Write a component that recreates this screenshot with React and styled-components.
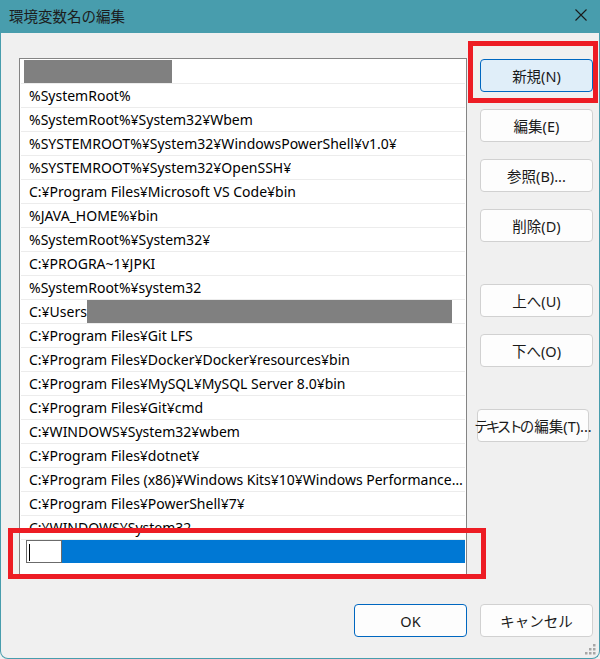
import React from "react";
import styled, { createGlobalStyle } from "styled-components";

const GlobalStyle = createGlobalStyle`
  html, body {
    margin: 0;
    padding: 0;
    background: #f0f0f0;
  }
  body {
    font-family: "Noto Sans", "Noto Sans CJK JP", sans-serif;
  }
`;

const Window = styled.div`
  position: relative;
  width: 600px;
  height: 659px;
  box-sizing: border-box;
  background: #f0f0f0;
  border: 1px solid #489dad;
  border-top: none;
  border-radius: 0 0 8px 8px;
  display: flex;
  flex-direction: column;
  overflow: hidden;
`;

const TitleBar = styled.div`
  height: 33px;
  flex: none;
  background: #489dad;
  display: flex;
  align-items: center;
  justify-content: space-between;
  padding: 0 13px 0 9px;
  margin: 0 -1px;
`;

const Title = styled.div`
  font-family: "Noto Sans CJK JP", sans-serif;
  font-size: 14.5px;
  color: #1c1c1c;
  padding-bottom: 2px;
`;

const CloseIcon = styled.svg`
  width: 12px;
  height: 12px;
  margin-bottom: 3px;
`;

const Body = styled.div`
  flex: 1;
  display: flex;
  flex-direction: column;
  padding: 25px 6px 0 18px;
`;

const Main = styled.div`
  display: flex;
  gap: 13px;
  height: 520px;
`;

const List = styled.div`
  width: 448px;
  box-sizing: border-box;
  border: 1px solid #848484;
  background: #fff;
  padding: 1px 1px 0 1px;
  overflow: hidden;
`;

const Row = styled.div`
  height: 23px;
  border-bottom: 1px solid #ececec;
  padding-left: 8px;
  padding-right: 2px;
  display: flex;
  align-items: center;
  font-size: 14px;
  color: #000;
  white-space: nowrap;
  overflow: hidden;
`;

const RowText = styled.span`
  flex: ${({ $keep }) => ($keep ? "none" : "0 1 auto")};
  min-width: 0;
  overflow: hidden;
  text-overflow: ellipsis;
`;

const Redacted = styled.span`
  display: inline-block;
  height: 23px;
  flex: ${({ $fill }) => ($fill ? "1" : "none")};
  width: ${({ $w }) => ($w ? `${$w}px` : "auto")};
  margin-left: ${({ $offset }) => $offset || 0}px;
  margin-right: ${({ $fill }) => ($fill ? 11 : 0)}px;
  background: #808080;
`;

const EditRow = styled.div`
  height: 23px;
  margin-left: 5px;
  background: #0078d4;
  display: flex;
`;

const EditInput = styled.div`
  width: 36px;
  height: 23px;
  box-sizing: border-box;
  background: #fff;
  border: 1px solid #6b6b6b;
  padding: 3px 0 0 2px;
`;

const Caret = styled.div`
  width: 1px;
  height: 17px;
  background: #000;
`;

const ButtonColumn = styled.div`
  display: flex;
  flex-direction: column;
  padding-top: 1px;
`;

const Button = styled.button`
  width: ${({ $w }) => $w || 113}px;
  height: 33px;
  margin-top: ${({ $gap }) => $gap || 0}px;
  margin-left: ${({ $shift }) => $shift || 0}px;
  box-sizing: border-box;
  border-radius: 4px;
  border: 1px solid ${({ $primary }) => ($primary ? "#0067c0" : "#d1d1d1")};
  background: ${({ $active }) => ($active ? "#e0eef9" : "#fdfdfd")};
  font-family: "Noto Sans", "Noto Sans CJK JP", sans-serif;
  font-size: 14.5px;
  color: #1a1a1a;
  padding: 0;
  white-space: nowrap;
  display: flex;
  align-items: center;
  justify-content: center;
  flex: none;
`;

const Kana = styled.span`
  letter-spacing: -3px;
  margin-right: 3px;
`;

const Footer = styled.div`
  display: flex;
  justify-content: flex-end;
  gap: 13px;
  margin-top: 26px;
`;

const Highlight = styled.div`
  position: absolute;
  left: ${({ $x }) => $x}px;
  top: ${({ $y }) => $y}px;
  width: ${({ $w }) => $w}px;
  height: ${({ $h }) => $h}px;
  box-sizing: border-box;
  border: 5px solid #ed1c24;
  pointer-events: none;
`;

const Grip = styled.svg`
  position: absolute;
  right: 3px;
  bottom: 3px;
  width: 12px;
  height: 12px;
`;

const paths = [
  "%SystemRoot%",
  "%SystemRoot%¥System32¥Wbem",
  "%SYSTEMROOT%¥System32¥WindowsPowerShell¥v1.0¥",
  "%SYSTEMROOT%¥System32¥OpenSSH¥",
  "C:¥Program Files¥Microsoft VS Code¥bin",
  "%JAVA_HOME%¥bin",
  "%SystemRoot%¥System32¥",
  "C:¥PROGRA~1¥JPKI",
  "%SystemRoot%¥system32",
];

const paths2 = [
  "C:¥Program Files¥Git LFS",
  "C:¥Program Files¥Docker¥Docker¥resources¥bin",
  "C:¥Program Files¥MySQL¥MySQL Server 8.0¥bin",
  "C:¥Program Files¥Git¥cmd",
  "C:¥WINDOWS¥System32¥wbem",
  "C:¥Program Files¥dotnet¥",
  "C:¥Program Files (x86)¥Windows Kits¥10¥Windows Performance Toolkit¥",
  "C:¥Program Files¥PowerShell¥7¥",
  "C:¥WINDOWS¥System32",
];

const App = () => {
  return (
    <>
      <GlobalStyle />
      <Window>
        <TitleBar>
          <Title>環境変数名の編集</Title>
          <CloseIcon viewBox="0 0 12 12">
            <path d="M0.5 0.5 L11.5 11.5 M11.5 0.5 L0.5 11.5" stroke="#1a1a1a" strokeWidth="1.1" fill="none" />
          </CloseIcon>
        </TitleBar>
        <Body>
          <Main>
            <List>
              <Row>
                <Redacted $w={148} $offset={-5} />
              </Row>
              {paths.map((p) => (
                <Row key={p}>
                  <RowText>{p}</RowText>
                </Row>
              ))}
              <Row>
                <RowText $keep>C:¥Users</RowText>
                <Redacted $fill />
              </Row>
              {paths2.map((p) => (
                <Row key={p}>
                  <RowText>{p}</RowText>
                </Row>
              ))}
              <EditRow>
                <EditInput>
                  <Caret />
                </EditInput>
              </EditRow>
            </List>
            <ButtonColumn>
              <Button $active $primary>新規(N)</Button>
              <Button $gap={17}>編集(E)</Button>
              <Button $gap={17}>参照(B)...</Button>
              <Button $gap={17}>削除(D)</Button>
              <Button $gap={42}>上へ(U)</Button>
              <Button $gap={17}>下へ(O)</Button>
              <Button $gap={42} $w={112} $shift={-3}>
                <Kana>テキストの</Kana>編集(T)...
              </Button>
            </ButtonColumn>
          </Main>
          <Footer>
            <Button $primary>OK</Button>
            <Button>キャンセル</Button>
          </Footer>
        </Body>
        <Highlight $x={467} $y={41} $w={130} $h={62} />
        <Highlight $x={7} $y={528} $w={478} $h={51} />
        <Grip viewBox="0 0 12 12">
          <rect x="9" y="1" width="2.5" height="2.5" fill="#a6a6a6" />
          <rect x="5" y="5" width="2.5" height="2.5" fill="#a6a6a6" />
          <rect x="9" y="5" width="2.5" height="2.5" fill="#a6a6a6" />
          <rect x="1" y="9" width="2.5" height="2.5" fill="#a6a6a6" />
          <rect x="5" y="9" width="2.5" height="2.5" fill="#a6a6a6" />
          <rect x="9" y="9" width="2.5" height="2.5" fill="#a6a6a6" />
        </Grip>
      </Window>
    </>
  );
};

export default App;
